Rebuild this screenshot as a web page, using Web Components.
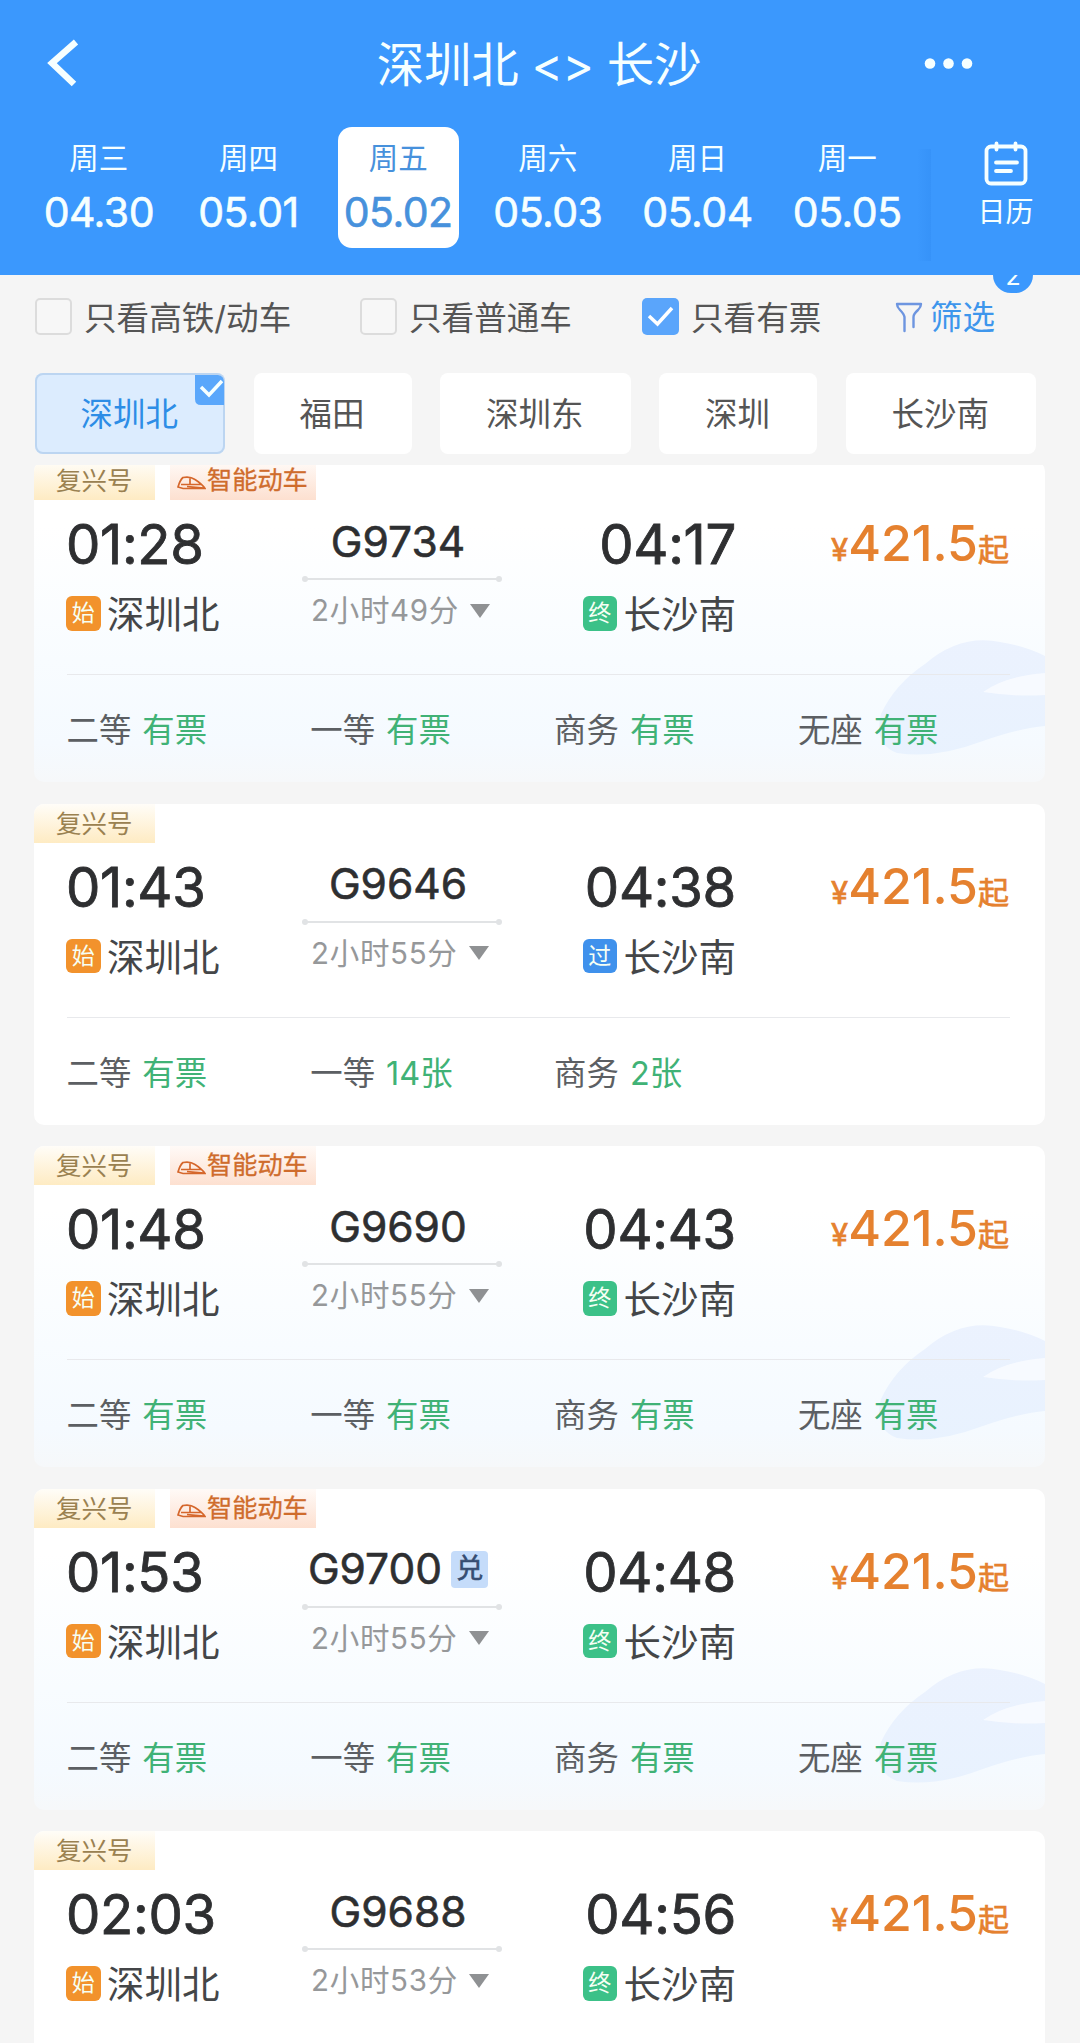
<!DOCTYPE html>
<html lang="zh-CN">
<head>
<meta charset="utf-8">
<title>深圳北 - 长沙</title>
<style>
    body {
        margin: 0;
        height: 2043px;
        overflow: hidden;
        background: #f5f5f5;
        font-family: Inter, "Noto Sans CJK SC", sans-serif;
        color: #2e2f31;
    }
    .page {
        height: 2043px;
        overflow: hidden;
    }
    .list {
        display: flex;
        flex-direction: column;
        gap: 21.5px;
        margin: -4px 35px 0 34px;
    }
</style>
</head>
<body>

<template id="nav-header">
    <style>
        :host {
            display: block;
            position: relative;
            z-index: 3;
            height: 274.5px;
            background: #3b98fd;
            color: #f6ffff;
        }
        .bar {
            display: grid;
            grid-template-columns: 170px 1fr 170px;
            align-items: center;
            height: 125px;
            padding-bottom: 2px;
        }
        .title {
            font-size: 47.5px;
            line-height: 126px;
            text-align: center;
            white-space: pre;
            letter-spacing: -.3px;
            padding-top: 2px;
            margin-right: 2px;
        }
        svg {
            display: block;
            fill: none;
            stroke: #f6ffff;
        }
        .dots {
            fill: #f6ffff;
            stroke: none;
        }
        .days {
            display: flex;
            height: 121px;
            padding-left: 24px;
        }
        .tabs {
            display: flex;
            width: 898px;
        }
        .edge {
            width: 14px;
            height: 112px;
            margin-top: 22px;
            margin-left: -5px;
            background: linear-gradient(90deg, rgba(40, 130, 235, 0), rgba(40, 130, 235, .25));
        }
        .calendar {
            flex: 1;
            display: flex;
            flex-direction: column;
            align-items: center;
            padding: 14px 0 0 0;
            font-size: 28px;
            line-height: 40px;
        }
        .calendar svg {
            margin-bottom: 5px;
        }
    </style>
    <div class="bar">
        <svg width="130" height="127" viewBox="0 0 130 127" stroke-width="6.500"><path d="M76 41 L52 62 L74 83"/></svg>
        <div class="title"><slot name="title"></slot></div>
        <svg class="dots" width="130" height="127" viewBox="0 0 130 127"><circle cx="20" cy="62.500" r="5.300"/><circle cx="38.500" cy="62.500" r="5.300"/><circle cx="57" cy="62.500" r="5.300"/></svg>
    </div>
    <div class="days">
        <div class="tabs"><slot></slot></div>
        <div class="edge"></div>
        <div class="calendar">
            <svg width="46" height="46" viewBox="0 0 46 46" stroke-width="3.800" stroke-linecap="round">
                <rect x="3.500" y="5.500" width="39" height="37" rx="4.500"/>
                <path d="M13.500 2.500V8.500M32.500 2.500V8.500M13 21.500H34M13 30H28"/>
            </svg>
            <slot name="calendar"></slot>
        </div>
    </div>
</template>

<template id="date-tab">
    <style>
        :host {
            flex: 1;
            display: flex;
            justify-content: center;
        }
        .box {
            box-sizing: border-box;
            width: 121px;
            height: 121px;
            padding-top: 10px;
            border-radius: 14px;
            text-align: center;
        }
        :host([active]) .box {
            background: #fff;
            color: #4791dc;
        }
        .week {
            font-size: 29.5px;
            line-height: 42px;
        }
        .date {
            font-size: 41px;
            line-height: 44px;
            margin: 11px -10px 0;
            letter-spacing: -.5px;
            -webkit-text-stroke: .6px;
            white-space: nowrap;
        }
    </style>
    <div class="box">
        <div class="week"><slot name="week"></slot></div>
        <div class="date"><slot></slot></div>
    </div>
</template>

<template id="filter-bar">
    <style>
        :host {
            display: block;
            position: relative;
            z-index: 2;
            height: 190.5px;
            background: #f5f5f5;
        }
        .checks {
            display: grid;
            grid-template-columns: 325px 282px 253px 1fr;
            height: 84px;
            padding-left: 35px;
            align-items: center;
        }
        .filter {
            display: flex;
            align-items: center;
            gap: 7px;
            color: #3e96ec;
            font-size: 32.5px;
            line-height: 48px;
            padding-top: 2px;
        }
        .filter svg {
            fill: none;
            stroke: #6d95e0;
            stroke-width: 2.4;
            stroke-linejoin: round;
            stroke-linecap: round;
        }
        .count {
            position: absolute;
            top: -18px;
            left: 993px;
            width: 40px;
            height: 36px;
            border-radius: 18px;
            background: #3b98fd;
            color: #f6ffff;
            font-size: 25px;
            line-height: 39px;
            text-align: center;
        }
        .stations {
            display: flex;
            gap: 28.5px;
            padding: 14.5px 0 0 34.5px;
        }
    </style>
    <div class="checks">
        <slot name="check"></slot>
        <div class="filter">
            <svg width="28" height="34" viewBox="0 0 28 34"><path d="M9.500 30V16Q9 13 5 9Q2 6 2 3H26Q26 6 23 9Q18.500 13 18.500 16V26"/></svg>
            <slot name="filter"></slot>
        </div>
    </div>
    <div class="count"><slot name="count"></slot></div>
    <div class="stations"><slot></slot></div>
</template>

<template id="check-item">
    <style>
        :host {
            display: flex;
            align-items: center;
            gap: 12px;
            font-size: 32.6px;
            line-height: 48px;
            color: #555;
            white-space: nowrap;
        }
        .box {
            box-sizing: border-box;
            width: 37.5px;
            height: 37.5px;
            margin-left: -.5px;
            border: 2.500px solid #dcdcdc;
            border-radius: 5px;
            background: #f7f7f7;
        }
        .text {
            padding-top: 3px;
        }
        svg {
            display: none;
        }
        :host([checked]) .box {
            border: 0;
            background: #5aa5fb;
        }
        :host([checked]) svg {
            display: block;
        }
    </style>
    <div class="box"><svg width="37" height="37" viewBox="0 0 37 37" fill="none" stroke="#fff" stroke-width="3.500"><path d="M7 18L15.500 26L30 10"/></svg></div>
    <div class="text"><slot></slot></div>
</template>

<template id="station-chip">
    <style>
        :host {
            box-sizing: border-box;
            position: relative;
            height: 81px;
            border-radius: 8px;
            background: #fff;
            font-size: 32.5px;
            line-height: 83px;
            text-align: center;
            color: #555;
            white-space: nowrap;
            width: 158px;
        }
        :host([wide]) {
            width: 190.5px;
        }
        :host([selected]) {
            background: #dcecfe;
            box-shadow: inset 0 0 0 2px #bcd5f1;
            color: #2d8de6;
        }
        .text {
            margin-right: 1px;
        }
        svg {
            display: none;
            position: absolute;
            top: 2px;
            right: 1px;
        }
        :host([selected]) svg {
            display: block;
        }
    </style>
    <div class="text"><slot></slot></div>
    <svg width="29" height="30" viewBox="0 0 29 30"><path d="M0 0H23Q29 1 29 7V30H6Q0 30 0 24Z" fill="#5aa7fb"/><path d="M6 12L14 20L27 6" fill="none" stroke="#f6ffff" stroke-width="3.500"/></svg>
</template>

<template id="train-card">
    <style>
        :host {
            position: relative;
            display: block;
            height: 321px;
            border-radius: 10px;
            background: #fff;
            overflow: hidden;
        }
        :host([smart]) {
            background: linear-gradient(#fff 20%, #f8fcff 62%, #f5faff 88%, #f6f8fa);
        }
        .scene {
            display: none;
            position: absolute;
            right: 0;
            bottom: 0;
        }
        :host([smart]) .scene {
            display: block;
        }
        .content {
            position: relative;
        }
        .tags {
            display: flex;
            gap: 15px;
            height: 39px;
            font-size: 25.5px;
            line-height: 39px;
        }
        .tag {
            display: flex;
            align-items: center;
            box-sizing: border-box;
            width: 121px;
            padding-left: 22px;
            white-space: nowrap;
            color: #9a8150;
            background: linear-gradient(#fffdf8, #feebc3);
        }
        .tag.smart {
            display: none;
            width: 146px;
            padding-left: 7px;
            gap: 1px;
            font-size: 25.2px;
            color: #cf6c2c;
            -webkit-text-stroke: .3px;
            background: linear-gradient(#fffaf7, #fde0d0);
        }
        :host([smart]) .tag.smart {
            display: flex;
        }
        .tag svg {
            margin-top: 5px;
        }
        .trip {
            display: grid;
            grid-template-columns: 200px 200px 269px 1fr;
            height: 174px;
            padding: 0 36px 0 33px;
        }
        .time {
            height: 89px;
            font-size: 54.500px;
            line-height: 89px;
            letter-spacing: -.3px;
            margin-left: -1px;
            -webkit-text-stroke: .8px;
        }
        .stop {
            display: flex;
            align-items: center;
            gap: 6.5px;
            margin-left: -1px;
            font-size: 37.5px;
            line-height: 51px;
            color: #444648;
            white-space: nowrap;
        }
        .stop b {
            width: 34.5px;
            height: 34.5px;
            margin-top: -2px;
            border-radius: 6px;
            font-size: 23px;
            font-weight: 400;
            line-height: 34px;
            text-align: center;
            color: #f6fff4;
        }
        .begin { background: #f2922c; }
        .end { background: #3cc188; }
        .pass { background: #3f91ec; }
        .middle {
            padding-left: 35px;
            width: 200px;
        }
        .number {
            display: flex;
            align-items: center;
            justify-content: center;
            gap: 9px;
            box-sizing: border-box;
            width: 192px;
            height: 78px;
            padding-top: 5px;
            font-size: 42.5px;
            line-height: 50px;
            -webkit-text-stroke: .6px;
        }
        .number i {
            width: 37px;
            height: 37px;
            margin-top: 1px;
            border-radius: 4px;
            background: #c5dcfa;
            color: #364d72;
            font-size: 27px;
            font-style: normal;
            line-height: 36px;
            text-align: center;
        }
        .middle svg {
            display: block;
            margin: -3px 0 0 0;
        }
        .duration {
            display: flex;
            align-items: center;
            gap: 11px;
            padding: 0 0 0 9px;
            font-size: 29.5px;
            line-height: 55px;
            letter-spacing: .7px;
            color: #96989a;
            white-space: nowrap;
        }
        .duration::after {
            content: "";
            border: 10.5px solid transparent;
            border-top: 14px solid #8f9193;
            border-bottom: 0;
        }
        .arrive {
            display: flex;
            flex-direction: column;
            align-items: flex-end;
        }
        .price {
            display: flex;
            align-items: baseline;
            justify-content: flex-end;
            height: 87px;
            font-size: 50px;
            line-height: 87px;
            font-weight: 500;
            color: #e5812f;
            white-space: nowrap;
        }
        .price small {
            font-size: 31px;
            font-weight: 400;
            -webkit-text-stroke: .7px;
        }
        .seats {
            display: grid;
            grid-template-columns: repeat(4, 243.8px);
            height: 107px;
            margin: 0 35px 0 32.5px;
            border-top: 1px solid #e8e9ec;
            line-height: 111px;
        }
    </style>
    <svg class="scene" width="170" height="160" viewBox="0 0 170 160">
        <defs>
            <linearGradient id="hill" x1="0" y1="0" x2="0" y2="1">
                <stop offset="0" stop-color="#eaf1fe"/>
                <stop offset="1" stop-color="#e7f1fe"/>
            </linearGradient>
        </defs>
        <path d="M6 92Q20 62 50 42Q85 12 125 20Q150 24 170 34V104Q145 106 105 120Q60 137 22 131Q-2 122 6 92Z" fill="url(#hill)" opacity=".9"/>
        <path d="M108 70Q130 54 170 51V73Q140 75 108 70Z" fill="#f8fbff" opacity=".9"/>
    </svg>
    <div class="content">
        <div class="tags">
            <div class="tag"><slot name="tag"></slot></div>
            <div class="tag smart">
                <svg width="29" height="16" viewBox="0 0 29 16" fill="none" stroke="#d5672c" stroke-width="1.700"><path d="M1 12Q3 5 6 2.500Q13 1 18 4.500Q25 9 28 13.500H6L1 12ZM13 2V9M4 9.500H24M10 11.500L27 13"/></svg>
                <slot name="smart"></slot>
            </div>
        </div>
        <div class="trip">
            <div>
                <div class="time"><slot name="depart"></slot></div>
                <div class="stop"><b class="begin">始</b><slot name="from"></slot></div>
            </div>
            <div class="middle">
                <div class="number"><slot name="number"></slot></div>
                <svg width="200" height="8" viewBox="0 0 200 8" fill="#e1e3e5"><path d="M3 3H197V5H3Z"/><circle cx="3" cy="4" r="3"/><circle cx="197" cy="4" r="3"/></svg>
                <div class="duration"><slot name="duration"></slot></div>
            </div>
            <div class="arrive">
                <div class="time"><slot name="arrive"></slot></div>
                <div class="stop"><b class="last"></b><slot name="to"></slot></div>
            </div>
            <div class="price"><small>¥</small><slot name="price"></slot><small>起</small></div>
        </div>
        <div class="seats"><slot></slot></div>
    </div>
</template>

<template id="seat-info">
    <style>
        :host {
            display: flex;
            gap: 11px;
            font-size: 32.4px;
            color: #5c5f63;
            white-space: nowrap;
        }
        .left {
            color: #40b276;
        }
    </style>
    <span><slot></slot></span>
    <span class="left"><slot name="left"></slot></span>
</template>

<script>
    // Base class: clones the template that has the tag's own name.
    class Base extends HTMLElement {
        constructor() {
            super();
            this.attachShadow({ mode: "open" });
            const template = document.getElementById(this.localName);
            this.shadowRoot.appendChild(template.content.cloneNode(true));
        }
    }

    customElements.define("nav-header", class extends Base {});
    customElements.define("date-tab", class extends Base {});
    customElements.define("filter-bar", class extends Base {});
    customElements.define("check-item", class extends Base {});
    customElements.define("station-chip", class extends Base {});
    customElements.define("seat-info", class extends Base {});

/*
One train in the list.
Available attributes:
smart: Shows the second tag and the tinted background.
pass: The train goes on after the arrival station.
exchange: Shows the points badge after the train number.
*/
    class TrainCard extends Base {
        connectedCallback() {
            const last = this.shadowRoot.querySelector(".last");
            const pass = this.hasAttribute("pass");
            last.textContent = pass ? "过" : "终";
            last.classList.add(pass ? "pass" : "end");
            if (this.hasAttribute("exchange")) {
                const badge = document.createElement("i");
                badge.textContent = "兑";
                this.shadowRoot.querySelector(".number").appendChild(badge);
            }
        }
    }
    customElements.define("train-card", TrainCard);
</script>

<div class="page">
<nav-header>
    <span slot="title">深圳北 &lt;&gt; 长沙</span>
    <date-tab><span slot="week">周三</span>04.30</date-tab>
    <date-tab><span slot="week">周四</span>05.01</date-tab>
    <date-tab active><span slot="week">周五</span>05.02</date-tab>
    <date-tab><span slot="week">周六</span>05.03</date-tab>
    <date-tab><span slot="week">周日</span>05.04</date-tab>
    <date-tab><span slot="week">周一</span>05.05</date-tab>
    <span slot="calendar">日历</span>
</nav-header>

<filter-bar>
    <check-item slot="check">只看高铁/动车</check-item>
    <check-item slot="check">只看普通车</check-item>
    <check-item slot="check" checked>只看有票</check-item>
    <span slot="filter">筛选</span>
    <span slot="count">2</span>
    <station-chip wide selected>深圳北</station-chip>
    <station-chip>福田</station-chip>
    <station-chip wide>深圳东</station-chip>
    <station-chip>深圳</station-chip>
    <station-chip wide>长沙南</station-chip>
</filter-bar>

<div class="list">
    <train-card smart>
        <span slot="tag">复兴号</span><span slot="smart">智能动车</span>
        <span slot="depart">01:28</span><span slot="from">深圳北</span>
        <span slot="number">G9734</span><span slot="duration">2小时49分</span>
        <span slot="arrive">04:17</span><span slot="to">长沙南</span>
        <span slot="price">421.5</span>
        <seat-info>二等<span slot="left">有票</span></seat-info>
        <seat-info>一等<span slot="left">有票</span></seat-info>
        <seat-info>商务<span slot="left">有票</span></seat-info>
        <seat-info>无座<span slot="left">有票</span></seat-info>
    </train-card>
    <train-card pass>
        <span slot="tag">复兴号</span>
        <span slot="depart">01:43</span><span slot="from">深圳北</span>
        <span slot="number">G9646</span><span slot="duration">2小时55分</span>
        <span slot="arrive">04:38</span><span slot="to">长沙南</span>
        <span slot="price">421.5</span>
        <seat-info>二等<span slot="left">有票</span></seat-info>
        <seat-info>一等<span slot="left">14张</span></seat-info>
        <seat-info>商务<span slot="left">2张</span></seat-info>
    </train-card>
    <train-card smart>
        <span slot="tag">复兴号</span><span slot="smart">智能动车</span>
        <span slot="depart">01:48</span><span slot="from">深圳北</span>
        <span slot="number">G9690</span><span slot="duration">2小时55分</span>
        <span slot="arrive">04:43</span><span slot="to">长沙南</span>
        <span slot="price">421.5</span>
        <seat-info>二等<span slot="left">有票</span></seat-info>
        <seat-info>一等<span slot="left">有票</span></seat-info>
        <seat-info>商务<span slot="left">有票</span></seat-info>
        <seat-info>无座<span slot="left">有票</span></seat-info>
    </train-card>
    <train-card smart exchange>
        <span slot="tag">复兴号</span><span slot="smart">智能动车</span>
        <span slot="depart">01:53</span><span slot="from">深圳北</span>
        <span slot="number">G9700</span><span slot="duration">2小时55分</span>
        <span slot="arrive">04:48</span><span slot="to">长沙南</span>
        <span slot="price">421.5</span>
        <seat-info>二等<span slot="left">有票</span></seat-info>
        <seat-info>一等<span slot="left">有票</span></seat-info>
        <seat-info>商务<span slot="left">有票</span></seat-info>
        <seat-info>无座<span slot="left">有票</span></seat-info>
    </train-card>
    <train-card>
        <span slot="tag">复兴号</span>
        <span slot="depart">02:03</span><span slot="from">深圳北</span>
        <span slot="number">G9688</span><span slot="duration">2小时53分</span>
        <span slot="arrive">04:56</span><span slot="to">长沙南</span>
        <span slot="price">421.5</span>
    </train-card>
</div>
</div>

</body>
</html>
